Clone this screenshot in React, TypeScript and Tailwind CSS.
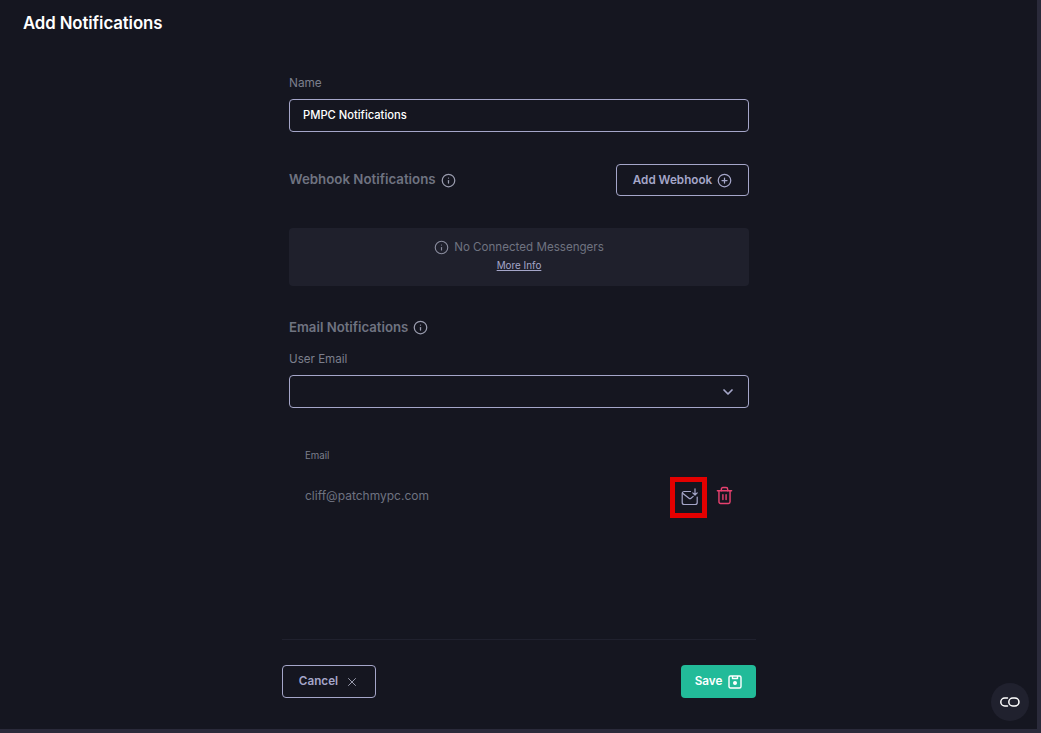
import { ChevronDown, CirclePlus, Info, Trash2, X } from "lucide-react";

const font = { fontFamily: "Inter, 'Noto Sans', sans-serif" };

const MailDown = () => (
  <svg width="18" height="18" viewBox="0 0 18 18" fill="none" stroke="#a5a6c9" strokeWidth="1.2" strokeLinecap="round" strokeLinejoin="round">
    <path d="M9.5 3.5H3.2A2 2 0 0 0 1.2 5.5v9a2 2 0 0 0 2 2h11a2 2 0 0 0 2-2V9" />
    <path d="M1.6 5.2 8 10.2a1.6 1.6 0 0 0 2 0l2.2-1.8" />
    <path d="M14 .8v6M11.8 4.8 14 7l2.2-2.2" />
  </svg>
);

const Disk = () => (
  <svg width="14" height="14" viewBox="0 0 14 14" fill="none" stroke="#fff" strokeWidth="1.4" strokeLinejoin="round">
    <path d="M2.5 1h9A1.5 1.5 0 0 1 13 2.5v9a1.5 1.5 0 0 1-1.5 1.5h-9A1.5 1.5 0 0 1 1 11.5v-9A1.5 1.5 0 0 1 2.5 1Z" />
    <path d="M4.5 1v2.5h5V1" />
    <circle cx="7" cy="8" r="1.3" fill="#fff" />
  </svg>
);

const LinkLogo = () => (
  <svg width="20" height="10" viewBox="0 0 20 10" fill="none" stroke="#fff" strokeWidth="1.5" strokeLinecap="round">
    <path d="M7.5 1H4.8a3.9 3.9 0 0 0 0 8h2.7" />
    <rect x="8.8" y="1" width="10.2" height="8" rx="4" />
  </svg>
);

export default function App() {
  return (
    <div className="w-[1041px] h-[733px] overflow-hidden flex flex-col bg-[#2a2a3a]" style={font}>
      <div className="relative h-[729px] w-[1037px] bg-[#151620]">
        <h1 className="pl-[23px] pt-[11px] text-[16.8px] leading-[24px] font-semibold text-white tracking-[-0.1px]">Add Notifications</h1>

        <div className="w-[474px] ml-[282px] mt-[39px]">
          <div className="px-[7px]">
            <label className="block text-[11.8px] leading-[18px] text-[#7c7f8c]">Name</label>
            <div className="mt-[7px] h-[33px] flex items-center px-[13px] rounded-[4px] border border-[#a5a6c9] text-[11.2px] font-medium text-white">PMPC Notifications</div>

            <div className="mt-[32px] flex items-center justify-between">
              <div className="flex items-center gap-[5px] text-[13.3px] font-semibold text-[#6f7380]">
                Webhook Notifications
                <Info size={15} strokeWidth={2} className="text-[#9a9cae]" />
              </div>
              <button className="w-[133px] h-[32px] flex items-center justify-center gap-[5px] rounded-[4px] border border-[#a5a6c9] text-[11.7px] font-semibold text-[#a5a6c9]">
                <span className="pt-[2px]">Add Webhook</span>
                <CirclePlus size={15} strokeWidth={2} />
              </button>
            </div>

            <div className="mt-[32px] h-[58px] rounded-[4px] bg-[#1f202c] flex flex-col items-center pt-[10px]">
              <div className="flex items-center gap-[5px] text-[11.6px] leading-[18px] text-[#6f7380]">
                <Info size={15} strokeWidth={1.8} className="text-[#8a8c9e]" />
                No Connected Messengers
              </div>
              <a className="mt-[1px] text-[9.9px] leading-[16px] underline text-[#a5a6c9]">More Info</a>
            </div>

            <div className="mt-[32px] flex items-center gap-[5px] text-[13.2px] leading-[18px] font-semibold text-[#6f7380]">
              Email Notifications
              <Info size={15} strokeWidth={2} className="text-[#9a9cae]" />
            </div>
            <label className="block mt-[14px] text-[11.6px] leading-[18px] text-[#7c7f8c]">User Email</label>
            <div className="mt-[7px] h-[33px] flex items-center justify-end pr-[12px] rounded-[4px] border border-[#a5a6c9] text-[#a5a6c9]">
              <ChevronDown size={16} strokeWidth={2.6} />
            </div>

            <div className="mt-[41px] pl-[16px] text-[9.7px] leading-[14px] text-[#7c7f8c]">Email</div>
            <div className="mt-[14px] flex items-center pl-[16px] pr-[15px]">
              <span className="flex-1 pb-[3px] text-[12px] text-[#6f7380]">cliff@patchmypc.com</span>
              <span className="w-[37px] h-[41px] flex items-center justify-center pb-[2px] pl-[3px] border-[5px] border-[#e30000]"><MailDown /></span>
              <Trash2 size={19} strokeWidth={1.8} className="ml-[8px] mb-[4px] text-[#e8416f]" />
            </div>
          </div>

          <div className="mt-[121px] border-t border-[#20212e] pt-[25px] flex items-center justify-between">
            <button className="w-[94px] h-[33px] flex items-center justify-center gap-[7px] rounded-[4px] border border-[#a5a6c9] text-[11.7px] font-semibold text-[#a5a6c9]">
              <span className="pt-[1px]">Cancel</span>
              <X size={14} strokeWidth={1.7} className="text-[#9a9cae]" />
            </button>
            <button className="w-[75px] h-[33px] flex items-center justify-center gap-[6px] rounded-[4px] bg-[#22bb99] text-[11.7px] font-semibold text-white">
              <span className="pt-[1px]">Save</span>
              <Disk />
            </button>
          </div>
        </div>

        <button className="absolute left-[991px] top-[683px] w-[38px] h-[38px] rounded-full bg-[#20212e] flex items-center justify-center">
          <LinkLogo />
        </button>
      </div>
    </div>
  );
}
